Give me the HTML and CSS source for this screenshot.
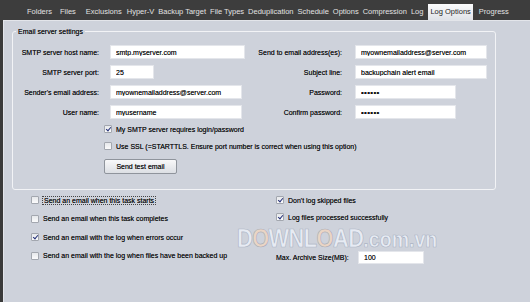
FILE: index.html
```html
<!DOCTYPE html>
<html lang="en">
<head>
    <meta charset="UTF-8">
    <title>Log Options</title>
    <link rel="stylesheet" href="styles.css">
</head>
<body>
    <div class="app">
        <div class="tabs">
            <span class="tab first">Folders</span>
            <span class="tab second">Files</span>
            <span class="tab third">Exclusions</span>
            <span class="tab">Hyper-V</span>
            <span class="tab">Backup Target</span>
            <span class="tab">File Types</span>
            <span class="tab">Deduplication</span>
            <span class="tab">Schedule</span>
            <span class="tab">Options</span>
            <span class="tab">Compression</span>
            <span class="tab">Log</span>
            <span class="tab active">Log Options</span>
            <span class="tab">Progress</span>
        </div>
        <div class="main">
            <div class="strip"></div>
            <div class="panel">
                <fieldset class="group">
                    <legend>Email server settings</legend>
                    <div class="form">
                        <label class="lbl left">SMTP server host name:</label>
                        <div class="field"><input class="txt w-host" type="text" value="smtp.myserver.com"></div>
                        <label class="lbl right">Send to email address(es):</label>
                        <div class="field"><input class="txt w-long" type="text" value="myownemailaddress@server.com"></div>

                        <label class="lbl left">SMTP server port:</label>
                        <div class="field"><input class="txt w-port" type="text" value="25"></div>
                        <label class="lbl right">Subject line:</label>
                        <div class="field"><input class="txt w-long" type="text" value="backupchain alert email"></div>

                        <label class="lbl left">Sender's email address:</label>
                        <div class="field"><input class="txt w-mid" type="text" value="myownemailaddress@server.com"></div>
                        <label class="lbl right">Password:</label>
                        <div class="field"><input class="txt w-pass" type="password" value="secret"></div>

                        <label class="lbl left">User name:</label>
                        <div class="field"><input class="txt w-mid" type="text" value="myusername"></div>
                        <label class="lbl right">Confirm password:</label>
                        <div class="field"><input class="txt w-pass" type="password" value="secret"></div>
                    </div>
                    <div class="extra">
                        <label class="chk"><input type="checkbox" checked><span>My SMTP server requires login/password</span></label>
                        <label class="chk"><input type="checkbox"><span>Use SSL (=STARTTLS. Ensure port number is correct when using this option)</span></label>
                        <button class="btn">Send test email</button>
                    </div>
                </fieldset>

                <div class="options">
                    <div class="col col-left">
                        <label class="chk"><input type="checkbox"><span class="focus">Send an email when this task starts</span></label>
                        <label class="chk"><input type="checkbox"><span>Send an email when this task completes</span></label>
                        <label class="chk"><input type="checkbox" checked><span>Send an email with the log when errors occur</span></label>
                        <label class="chk"><input type="checkbox"><span>Send an email with the log when files have been backed up</span></label>
                    </div>
                    <div class="col col-right">
                        <label class="chk"><input type="checkbox" checked><span>Don't log skipped files</span></label>
                        <label class="chk"><input type="checkbox" checked><span>Log files processed successfully</span></label>
                        <div class="archive">
                            <span class="archive-lbl">Max. Archive Size(MB):</span>
                            <input class="txt w-archive" type="text" value="100">
                        </div>
                    </div>
                </div>

                <div class="watermark">D<span class="o">O</span>WNL<span class="o">O</span>AD<span class="small">.com.vn</span></div>
            </div>
        </div>
    </div>
</body>
</html>
```

FILE: styles.css
```css
*{
    margin: 0;
    padding: 0;
    box-sizing: border-box;
}
body{
    width: 530px;
    height: 302px;
    overflow: hidden;
    background: #3c3c3c;
    font-family: "Liberation Sans", Arial, sans-serif;
    font-size: 7px;
    color: #111;
    text-shadow: 0 0 0.4px rgba(0, 0, 0, 0.7);
}
.app{
    display: flex;
    flex-direction: column;
    height: 302px;
}

/* tab bar */
.tabs{
    height: 20px;
    display: flex;
    align-items: flex-end;
    padding-left: 25px;
    background: #3d3d3d;
}
.tab{
    height: 16px;
    line-height: 16px;
    padding: 0 2px;
    font-size: 7.5px;
    color: #e2e2e2;
    text-shadow: none;
    white-space: nowrap;
}
.tab.first{
    padding: 0 4px 0 2px;
}
.tab.second{
    padding: 0 5px 0 4px;
}
.tab.third{
    padding: 0 3px 0 5px;
}
.tab.active{
    margin-left: 3px;
    margin-right: 4px;
    background: linear-gradient(#fbfbfc, #dfe2e8);
    color: #1c1c1c;
}

.main{
    flex: 1;
    display: flex;
}
.strip{
    width: 3px;
    background: #3a3a3a;
}
.panel{
    flex: 1;
    position: relative;
    background: #ced2db;
    border-left: 1px solid #e3e5ea;
    border-top: 1px solid #e3e5ea;
}

/* email group */
.group{
    width: 484px;
    height: 163px;
    margin: 6px 0 0 8px;
    padding: 9px 0 0 0;
    border: 1px solid #f2f3f6;
    border-radius: 3px;
}
.group legend{
    margin-left: 3px;
    padding: 0 2px;
    line-height: 9px;
}
.form{
    display: grid;
    grid-template-columns: 97px 150px 95px 132px;
    grid-auto-rows: 14px;
    row-gap: 6px;
}
.lbl{
    display: flex;
    align-items: center;
    justify-content: flex-end;
    white-space: nowrap;
}
.lbl.left{
    padding-right: 11px;
}
.lbl.right{
    padding-right: 13px;
}
.field{
    display: flex;
    align-items: center;
}
.txt{
    height: 14px;
    padding: 0 5px;
    border: 1px solid #e4e6eb;
    background: #fff;
    font-family: "Liberation Sans", Arial, sans-serif;
    font-size: 7px;
    color: #111;
    text-shadow: 0 0 0.4px rgba(0, 0, 0, 0.7);
    outline: none;
}
.txt[type="password"]{
    font-size: 8px;
    letter-spacing: 0.3px;
}
.w-host{ width: 135px; }
.w-port{ width: 44px; }
.w-mid{ width: 132px; }
.w-long{ width: 132px; }
.w-pass{ width: 101px; }
.w-archive{ width: 66px; height: 13px; }

.extra{
    display: flex;
    flex-direction: column;
    align-items: flex-start;
    margin: 5px 0 0 91px;
    gap: 7px;
}

/* checkboxes */
.chk{
    display: flex;
    align-items: center;
    gap: 4px;
    height: 10px;
    white-space: nowrap;
}
.chk input{
    appearance: none;
    -webkit-appearance: none;
    width: 8px;
    height: 8px;
    border: 1px solid #a3a7af;
    border-radius: 1px;
    background: linear-gradient(#e6e8eb, #fbfbfc);
    position: relative;
}
.chk input:checked::after{
    content: "";
    position: absolute;
    left: 2px;
    top: 0;
    width: 2px;
    height: 4px;
    border-right: 1px solid #26327a;
    border-bottom: 1px solid #26327a;
    transform: rotate(40deg);
}
.focus{
    outline: 1px dotted #444;
    outline-offset: 0;
    padding: 0 1px;
}

.btn{
    margin-top: 1px;
    width: 73px;
    height: 15px;
    border: 1px solid #8f949c;
    border-radius: 2px;
    background: linear-gradient(#f8f8f9, #dcdfe4);
    font-family: "Liberation Sans", Arial, sans-serif;
    font-size: 7px;
    color: #111;
    text-shadow: 0 0 0.4px rgba(0, 0, 0, 0.7);
}

/* options below */
.options{
    display: flex;
    margin-top: 5px;
}
.col{
    display: flex;
    flex-direction: column;
}
.col-left{
    margin-left: 27px;
    width: 245px;
    gap: 8.6px;
}
.col-right{
    gap: 7px;
}
.archive{
    display: flex;
    align-items: center;
    margin-top: 22px;
}
.archive-lbl{
    width: 82px;
    white-space: nowrap;
}

/* watermark */
.watermark{
    position: absolute;
    left: 233px;
    top: 205px;
    font-size: 25px;
    font-weight: bold;
    line-height: 1;
    color: rgba(240, 244, 252, 0.75);
    -webkit-text-stroke: 0.7px rgba(130, 142, 165, 0.55);
    text-shadow: none;
    white-space: nowrap;
    letter-spacing: -0.6px;
    transform: scaleX(0.87);
    transform-origin: left top;
}
.watermark .o{
    color: rgba(244, 214, 190, 0.75);
}
.watermark .small{
    font-size: 22.5px;
    letter-spacing: 0;
}
```
